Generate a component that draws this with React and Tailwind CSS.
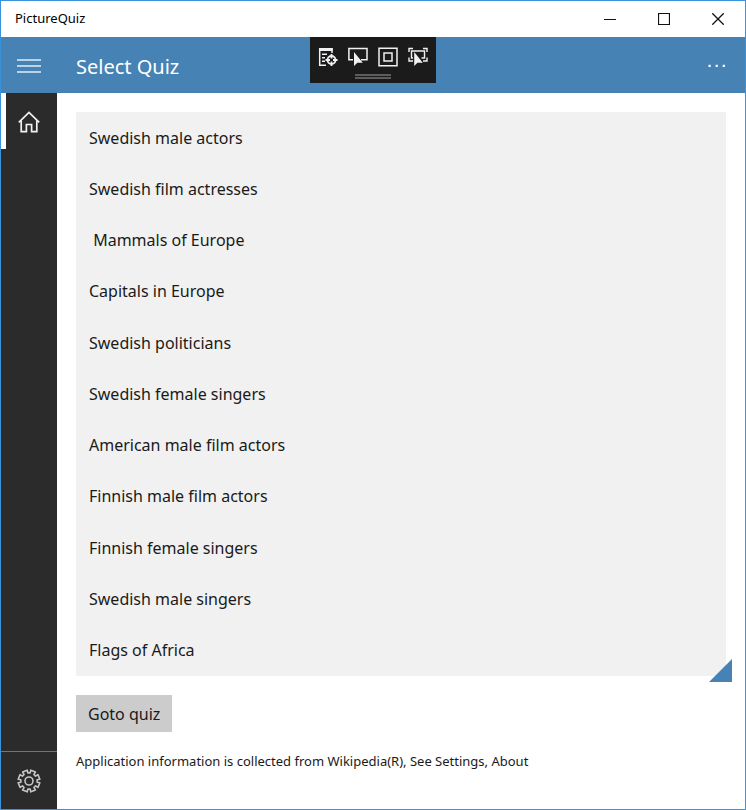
// PictureQuiz main window: title bar, navigation pane and quiz list.

import React, { useState } from 'react';

const quizzes = [
  'Swedish male actors',
  'Swedish film actresses',
  ' Mammals of Europe',
  'Capitals in Europe',
  'Swedish politicians',
  'Swedish female singers',
  'American male film actors',
  'Finnish male film actors',
  'Finnish female singers',
  'Swedish male singers',
  'Flags of Africa',
];

const GEAR_TEETH = 8;

// Closed outline of the settings gear, centred on 12,12.
const gearPath = () => {
  const points = [];
  const step = (Math.PI * 2) / GEAR_TEETH;
  for (let i = 0; i < GEAR_TEETH; i++) {
    const mid = i * step + step / 2;
    [[-0.25, 8.2], [-0.23, 11], [0.23, 11], [0.25, 8.2]].forEach(([offset, radius]) => {
      const a = mid + offset;
      points.push(`${(12 + radius * Math.cos(a)).toFixed(2)} ${(12 + radius * Math.sin(a)).toFixed(2)}`);
    });
  }
  return `M${points.join('L')}Z`;
};

const TitleBar = () => (
  <div className="flex h-9 shrink-0 items-center justify-between bg-white">
    <span className="pl-3.5 text-[13px] text-black">PictureQuiz</span>
    <div className="flex h-full">
      <button aria-label="Minimize" className="flex w-[54px] items-center justify-center">
        <svg width="12" height="12" viewBox="0 0 12 12" stroke="#111" fill="none">
          <path d="M0 6.5H12" />
        </svg>
      </button>
      <button aria-label="Maximize" className="flex w-[54px] items-center justify-center">
        <svg width="12" height="12" viewBox="0 0 12 12" stroke="#111" fill="none">
          <path d="M.5 .5H11.5V11.5H.5Z" strokeWidth="1.2" />
        </svg>
      </button>
      <button aria-label="Close" className="flex w-[54px] items-center justify-center">
        <svg width="12" height="12" viewBox="0 0 12 12" stroke="#111" fill="none">
          <path d="M.3 .3L11.7 11.7M11.7 .3L.3 11.7" strokeWidth="1.3" />
        </svg>
      </button>
    </div>
  </div>
);

// Debug toolbar that hangs over the header.
const DebugToolbar = () => (
  <div className="absolute top-0 left-1/2 flex h-[46px] w-[126px] -translate-x-1/2 flex-col items-center bg-[#1b1b1b] pt-2.5">
    <div className="flex gap-2.5">
      <button aria-label="Go to live visual tree">
        <svg width="20" height="20" viewBox="0 0 20 20" fill="none" stroke="#f1f1f1" strokeWidth="1.5">
          <path d="M1.7 1V18.2H8M14 1V6" />
          <path d="M1 2.5H14.7" strokeWidth="3" />
          <path d="M4 7.2H9M4 10.7H7M4 14.2H7" />
          <circle cx="13.5" cy="13" r="4" strokeWidth="1.8" />
          <path d="M13.5 7V11.5M13.5 14.5V19M7.5 13H12M15 13H19.5" strokeWidth="1.8" />
        </svg>
      </button>
      <button aria-label="Enable selection">
        <svg width="20" height="20" viewBox="0 0 20 20" fill="none" stroke="#f1f1f1" strokeWidth="1.5">
          <path d="M5 12.7H.9V1.5H19V12.7H13" />
          <path d="M6 5V19L9.3 15.8H14.8Z" fill="#f1f1f1" stroke="none" />
        </svg>
      </button>
      <button aria-label="Display layout adorners">
        <svg width="20" height="20" viewBox="0 0 20 20" fill="none" stroke="#f1f1f1" strokeWidth="1.5">
          <path d="M1 1.2H19V18.8H1Z" />
          <path d="M6 6H14V14H6Z" />
        </svg>
      </button>
      <button aria-label="Track focused element">
        <svg width="20" height="20" viewBox="0 0 20 20" fill="none" stroke="#f1f1f1" strokeWidth="1.4">
          <path d="M1 5V1.5H5M15 1.5H19V5M1 10.5V14H5M19 10.5V14H15" />
          <path d="M5 11H3.5V4H16.5V11H13.5" />
          <path d="M6.2 5V19L9.4 15.8H14.8Z" fill="#f1f1f1" stroke="none" />
        </svg>
      </button>
    </div>
    <div className="mt-[7px] h-[5px] w-9 border-y-2 border-[#5c5c5c]" />
  </div>
);

const Header = () => (
  <header className="relative flex h-14 shrink-0 items-center bg-[#4682b4] pt-0.5 text-white">
    <button aria-label="Menu" className="flex h-full w-14 items-center justify-center">
      <svg width="24" height="14" viewBox="0 0 24 14" stroke="#e3edf5" fill="none">
        <path d="M0 1H24M0 7H24M0 13H24" strokeWidth="1.3" />
      </svg>
    </button>
    <h1 className="flex-1 pt-0.5 pl-[19px] text-xl">Select Quiz</h1>
    <button aria-label="More" className="flex h-full w-14 items-center justify-center">
      <svg width="18" height="4" viewBox="0 0 18 4" fill="#fff">
        <path d="M.5 .8H2.7V3H.5ZM7.6 .8H9.8V3H7.6ZM14.7 .8H16.9V3H14.7Z" />
      </svg>
    </button>
    <DebugToolbar />
  </header>
);

const Sidebar = () => (
  <nav className="flex w-14 shrink-0 flex-col justify-between bg-[#2b2b2b]">
    <button aria-label="Home" className="flex h-14 items-center border-l-[5px] border-white pt-0.5 pl-3">
      <svg width="22" height="22" viewBox="0 0 22 22" fill="none" stroke="#f2f2f2" strokeWidth="1.7">
        <path d="M.8 11.4L11 1.4L21.2 11.4" />
        <path d="M3.2 9.5V20.6H8.4V13.5H13.6V20.6H18.8V9.5" />
      </svg>
    </button>
    <button aria-label="Settings" className="flex h-[58px] items-center justify-center border-t border-[#747474]">
      <svg width="24" height="24" viewBox="0 0 24 24" fill="none" stroke="#c4c4c4" strokeWidth="1.6" strokeLinejoin="round">
        <path d={gearPath()} />
        <circle cx="12" cy="12" r="4" />
      </svg>
    </button>
  </nav>
);

const App = () => {
  const [selected, setSelected] = useState(null);

  return (
    <div className="flex min-h-screen flex-col border border-[#3b92dc] bg-white font-['Noto_Sans','Open_Sans',sans-serif]">
      <TitleBar />
      <Header />
      <div className="flex flex-1">
        <Sidebar />
        <main className="flex flex-1 flex-col items-start pt-[19px] pr-[19px] pb-[38px] pl-[19px]">
          <div className="relative flex w-full flex-1 flex-col">
            <ul className="flex flex-1 flex-col bg-[#f1f1f1]">
              {quizzes.map((quiz) => (
                <li key={quiz} className="flex flex-1">
                  <button
                    onClick={() => setSelected(quiz)}
                    aria-pressed={selected === quiz}
                    className="flex-1 px-[13px] text-left text-base whitespace-pre text-[#1a1a1a] hover:bg-[#e6e6e6] aria-pressed:bg-[#c5d9ea]"
                  >
                    {quiz}
                  </button>
                </li>
              ))}
            </ul>
            <svg className="absolute -right-1.5 -bottom-1.5" width="23" height="23" viewBox="0 0 23 23">
              <path d="M23 0V23H0Z" fill="#4682b4" />
            </svg>
          </div>
          <button className="mt-[19px] h-[37px] bg-[#cccccc] px-3 text-base text-[#1a1a1a]">
            Goto quiz
          </button>
          <p className="mt-[19px] text-[13px] leading-5 text-[#1a1a1a]">
            Application information is collected from Wikipedia(R), See Settings, About
          </p>
        </main>
      </div>
    </div>
  );
};

export default App;
